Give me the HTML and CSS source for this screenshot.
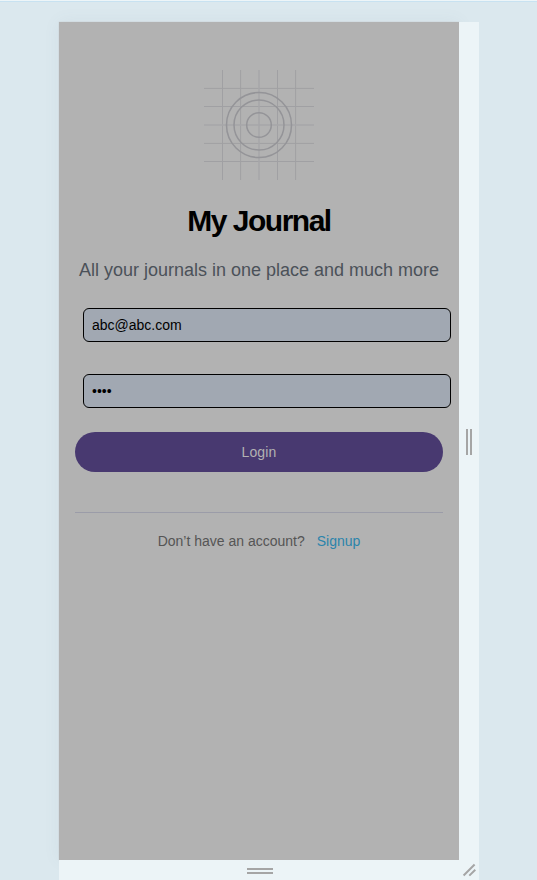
FILE: index.html
```html
<!DOCTYPE html>
<html lang="en">
<head>
<meta charset="utf-8">
<title>My Journal</title>
<link rel="stylesheet" href="styles.css">
</head>
<body>
<div class="stage">
  <div class="frame">
    <main class="screen">
      <svg class="logo" width="110" height="110" viewBox="0 0 110 110" fill="none">
        <g class="grid-lines">
          <path d="M18.5 0V110M36.6 0V110M73.5 0V110M91.6 0V110M0 18.4H110M0 36.5H110M0 73.4H110M0 91.5H110"/>
          <path class="center-lines" d="M55 0V110M0 55H110"/>
        </g>
        <g class="rings"><circle cx="55" cy="55" r="32.5"/><circle cx="55" cy="55" r="25"/><circle cx="55" cy="55" r="12.3"/></g>
      </svg>
      <h1>My Journal</h1>
      <p class="tagline">All your journals in one place and much more</p>
      <form>
        <input class="field" type="email" value="abc@abc.com" aria-label="Email">
        <input class="field" type="password" value="1234" aria-label="Password">
        <button class="login" type="button">Login</button>
      </form>
      <p class="signup"><span>Don’t have an account?</span><a href="#">Signup</a></p>
    </main>
    <div class="handle"><i class="grip vertical"></i></div>
    <div class="handle"><i class="grip horizontal"></i></div>
    <div class="handle corner">
      <svg width="20" height="20" viewBox="0 0 20 20"><path d="M4.6 15.5L15.6 4.5M10.3 15.6L16.3 9.8"/></svg>
    </div>
  </div>
</div>
</body>
</html>
```
FILE: styles.css
```css
* {
  box-sizing: border-box;
}

body {
  margin: 0;
  height: 880px;
  overflow: hidden;
  background: #dbe8ee;
  font-family: "Liberation Sans", Arial, sans-serif;
}

.stage {
  height: 880px;
  padding: 20px 0 0 59px;
  border-top: 1px solid #edf5f8;
  box-shadow: inset 0 1px #c8e2f1;
}

.frame {
  display: grid;
  grid-template-columns: 400px 20px;
  grid-template-rows: 838px 20px;
  width: 420px;
  margin-top: 1px;
}

.screen {
  display: flex;
  flex-direction: column;
  align-items: center;
  padding: 48px 16px 0;
  background: #b2b2b2;
  box-shadow: 0 0 1px #bbb, 0 0 16px rgba(100, 120, 130, .07);
}

.logo {
  flex: none;
}

.grid-lines {
  stroke: #a0a0a3;
  stroke-width: 1;
}

.center-lines {
  stroke: #a6a6a9;
  stroke-width: 1.4;
}

.rings {
  stroke: #949498;
  stroke-width: 1.5;
}

h1 {
  margin: 23px 0 0;
  font-size: 30px;
  line-height: 36px;
  letter-spacing: -1.5px;
  color: #000;
}

.tagline {
  margin: 17px 0 0;
  font-size: 18px;
  line-height: 28px;
  white-space: nowrap;
  color: #4b5159;
}

form {
  display: flex;
  flex-direction: column;
  width: 368px;
  margin-top: 24px;
  padding-bottom: 40px;
  border-bottom: 1px solid #9b9ca8;
}

.field {
  width: 368px;
  height: 34px;
  margin: 0 0 32px 8px;
  padding: 0 8px;
  border: 1px solid #000;
  border-radius: 6px;
  outline: 0;
  background: #a1a8b2;
  font: 14px "Liberation Sans", Arial, sans-serif;
  color: #000;
}

.login {
  height: 40px;
  margin-top: -8px;
  padding: 0;
  border: 0;
  border-radius: 20px;
  background: #483970;
  font: 14px "Liberation Sans", Arial, sans-serif;
  letter-spacing: .14px;
  color: #b2b2b2;
}

.signup {
  display: flex;
  gap: 12px;
  margin: 18px 0 0;
  font-size: 14px;
  line-height: 20px;
  color: #555;
}

.signup a {
  color: #2b84ab;
  text-decoration: none;
}

.handle {
  display: flex;
  align-items: center;
  justify-content: center;
  background: #ecf4f7;
}

.grip.vertical {
  width: 6px;
  height: 26px;
  margin-top: 2px;
  border: solid #a5a5a5;
  border-width: 0 2px;
}

.grip.horizontal {
  width: 26px;
  height: 6px;
  margin: 2px 0 0 2px;
  border: solid #a5a5a5;
  border-width: 2px 0;
}

.corner svg {
  fill: none;
  stroke: #a5a5a5;
  stroke-width: 2;
}
```
